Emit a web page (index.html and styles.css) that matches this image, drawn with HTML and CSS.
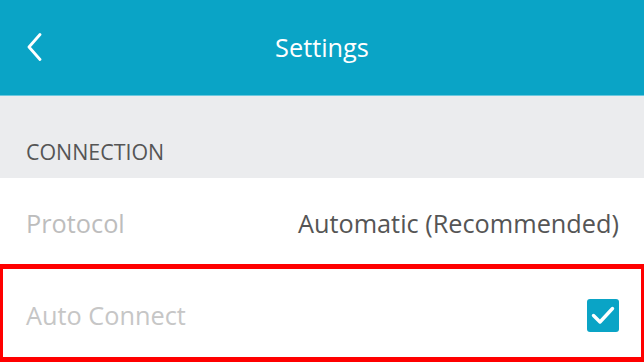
FILE: index.html
```html
<!DOCTYPE html>
<html>
<head>
<meta charset="utf-8">
<link rel="stylesheet" href="styles.css">
</head>
<body>
<div class="app">
  <header class="topbar">
    <button class="back" aria-label="Back">
      <svg width="16" height="28" viewBox="0 0 16 28"><path d="M14 1.5 L3 14 L14 26.5" fill="none" stroke="#fff" stroke-width="2.8" stroke-linecap="round" stroke-linejoin="round"/></svg>
    </button>
    <h1 class="title">Settings</h1>
    <div class="spacer"></div>
  </header>
  <div class="section-head">CONNECTION</div>
  <div class="row">
    <span class="label">Protocol</span>
    <span class="value">Automatic (Recommended)</span>
  </div>
  <div class="row row-highlight">
    <span class="label">Auto Connect</span>
    <span class="checkbox">
      <svg width="32" height="33" viewBox="0 0 32 33"><path d="M6.5 16.5 L13 23 L25.5 9.5" fill="none" stroke="#fff" stroke-width="3.4" stroke-linecap="round" stroke-linejoin="round"/></svg>
    </span>
  </div>
</div>
</body>
</html>
```
FILE: styles.css
```css
* { box-sizing: border-box; }
html, body { margin: 0; padding: 0; }
body {
  width: 644px;
  height: 362px;
  overflow: hidden;
  background: #fff;
  font-family: "Open Sans", "Noto Sans", sans-serif;
}
.app { display: flex; flex-direction: column; }
.topbar {
  height: 96px;
  background: #0aa4c6;
  border-bottom: 1px solid #6cc8de;
  display: flex;
  align-items: center;
  padding: 0 0 1px 26px;
}
.back {
  background: none;
  border: 0;
  padding: 0;
  width: 16px;
  height: 28px;
  display: flex;
}
.title {
  flex: 1;
  margin: 0 42px 0 0;
  text-align: center;
  color: #fff;
  font-weight: 400;
  font-size: 25.3px;
  line-height: 34px;
}
.spacer { width: 0; }
.section-head {
  height: 82px;
  background: #ebecee;
  color: #555;
  font-size: 21.4px;
  display: flex;
  align-items: flex-end;
  padding: 0 0 11px 26px;
  line-height: 30px;
}
.row {
  height: 86px;
  display: flex;
  align-items: center;
  justify-content: space-between;
  padding: 4px 25px 0 26px;
  font-size: 25.3px;
}
.label { color: #bdbdbd; }
.value { color: #555; }
.row-highlight {
  height: 98px;
  border: solid #ff0000;
  border-width: 5px 3px 5px 3px;
  padding: 4px 22px 0 23px;
}
.row-highlight .label { color: #c6c6c6; }
.checkbox {
  width: 32px;
  height: 33px;
  border-radius: 3px;
  background: #0aa4c6;
  display: flex;
}
```
